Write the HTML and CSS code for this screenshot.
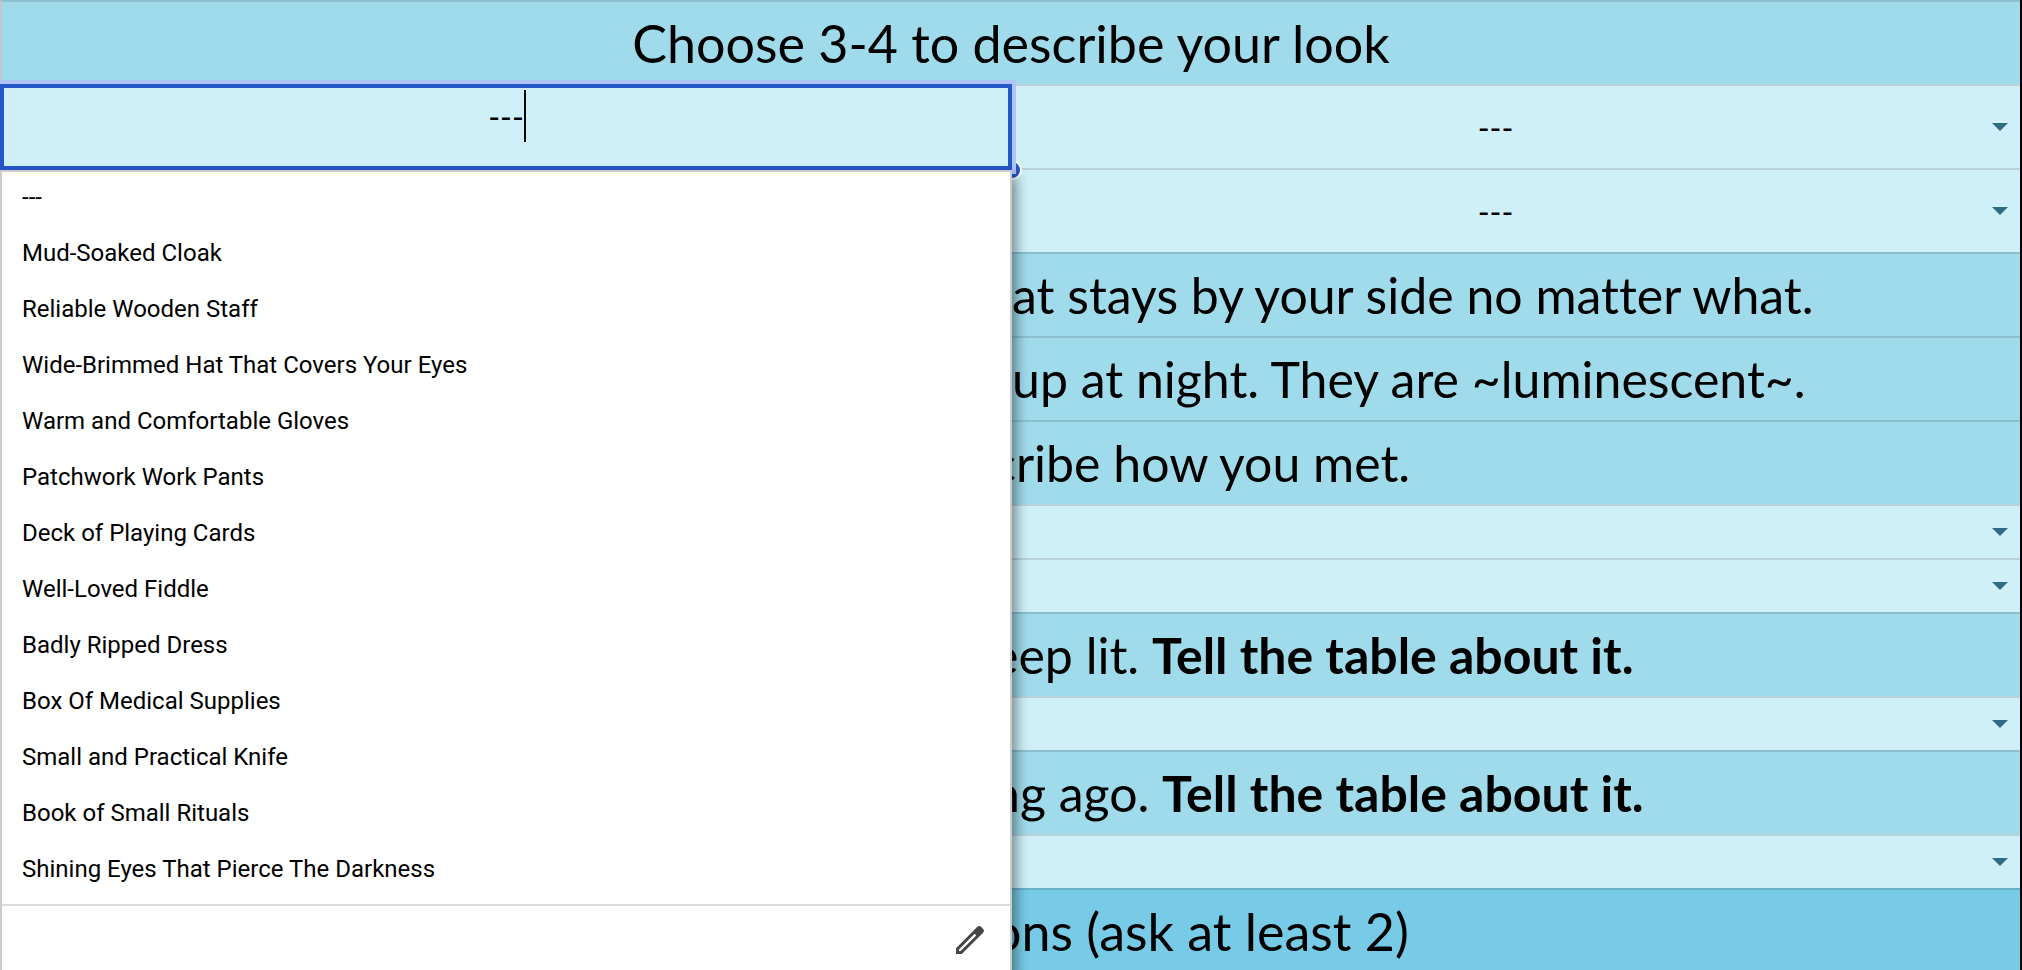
FILE: index.html
```html
<!DOCTYPE html>
<html lang="en">
<head>
<meta charset="utf-8">
<title>Character sheet</title>
<link rel="stylesheet" href="styles.css">
</head>
<body>
<main class="sheet">
  <h1 class="row heading title">Choose 3-4 to describe your look</h1>
  <div class="row pick tall">
    <label class="choice"><select aria-label="Look, second choice"><option>---</option></select><svg class="arrow" viewBox="0 0 16 8"><path d="M0 0h16L8 8z"/></svg></label>
  </div>
  <div class="row pick tall">
    <label class="choice"><select aria-label="Look, fourth choice"><option>---</option></select><svg class="arrow" viewBox="0 0 16 8"><path d="M0 0h16L8 8z"/></svg></label>
  </div>
  <p class="row note">at stays by your side no matter what.</p>
  <p class="row note">up at night. They are ~luminescent~.</p>
  <p class="row note cut">cribe how you met.</p>
  <div class="row pick">
    <label class="choice"><select aria-label="Meeting, first choice"><option></option></select><svg class="arrow" viewBox="0 0 16 8"><path d="M0 0h16L8 8z"/></svg></label>
  </div>
  <div class="row pick">
    <label class="choice"><select aria-label="Meeting, second choice"><option></option></select><svg class="arrow" viewBox="0 0 16 8"><path d="M0 0h16L8 8z"/></svg></label>
  </div>
  <p class="row note cut">eep lit. <b>Tell the table about it.</b></p>
  <div class="row pick">
    <label class="choice"><select aria-label="Light"><option></option></select><svg class="arrow" viewBox="0 0 16 8"><path d="M0 0h16L8 8z"/></svg></label>
  </div>
  <p class="row note cut">ng ago. <b>Tell the table about it.</b></p>
  <div class="row pick">
    <label class="choice"><select aria-label="Past"><option></option></select><svg class="arrow" viewBox="0 0 16 8"><path d="M0 0h16L8 8z"/></svg></label>
  </div>
  <h2 class="row heading note cut deep">ons (ask at least 2)</h2>

  <div class="picker">
    <span class="handle"></span>
    <div class="editor">
      <input class="field" type="text" value="---" aria-label="Look, first choice">
      <span class="caret"></span>
    </div>
    <div class="menu">
      <ul class="options" role="listbox" aria-label="Look options">
        <li role="option">---</li>
        <li role="option">Mud-Soaked Cloak</li>
        <li role="option">Reliable Wooden Staff</li>
        <li role="option">Wide-Brimmed Hat That Covers Your Eyes</li>
        <li role="option">Warm and Comfortable Gloves</li>
        <li role="option">Patchwork Work Pants</li>
        <li role="option">Deck of Playing Cards</li>
        <li role="option">Well-Loved Fiddle</li>
        <li role="option">Badly Ripped Dress</li>
        <li role="option">Box Of Medical Supplies</li>
        <li role="option">Small and Practical Knife</li>
        <li role="option">Book of Small Rituals</li>
        <li role="option">Shining Eyes That Pierce The Darkness</li>
      </ul>
      <div class="footer">
        <button class="edit" type="button" aria-label="Edit options"><svg viewBox="0 0 28 28"><path fill-rule="evenodd" d="M0 22.200 21.100 1.100q2.100-2.100 4.200 0l1.600 1.600q2.100 2.100 0 4.200L5.800 28H0zM3 23.400V25h1.600L20.300 9.400l-1.700-1.700z"/></svg></button>
      </div>
    </div>
  </div>
</main>
</body>
</html>
```
FILE: styles.css
```css
* { box-sizing: border-box; }

body {
  margin: 0;
  font-family: Lato, sans-serif;
  color: #000;
}

.sheet {
  position: relative;
  height: 100vh;
  overflow: hidden;
  border-right: 2px solid #000;
}

.row {
  margin: 0;
  height: 84px;
  border-top: 2px solid #8cc0cf;
  border-left: 2px solid #c4c8ca;
  background: #a0dbeb;
  font-size: 50px;
  font-weight: 400;
  font-variant-ligatures: none;
  line-height: 82px;
  white-space: nowrap;
}

.heading { font-size: 52px; }

.title { text-align: center; }

.note { padding-left: 50%; }

.cut { text-indent: -20px; }

.deep {
  background: #77cbe7;
  border-top-color: #69b2ca;
}

.pick {
  display: flex;
  justify-content: flex-end;
  height: 54px;
  border-top-color: #b8d2dc;
  background: #cff0f9;
}

.tall { height: 84px; }

.choice {
  position: relative;
  display: flex;
  align-items: center;
  width: 50%;
}

.choice select {
  flex: 1;
  height: 100%;
  padding: 0 40px 0 0;
  border: 0;
  background: transparent;
  color: #000;
  font: 32px Lato, sans-serif;
  text-align: center;
  text-align-last: center;
  appearance: none;
}

.arrow {
  position: absolute;
  right: 12px;
  width: 16px;
  height: 8px;
  fill: #2f6c81;
  pointer-events: none;
}

/* Open cell editor with its option list, lying over the left half */
.picker {
  position: absolute;
  top: 84px;
  left: 0;
  width: calc(50% + 2px);
}

.editor {
  position: relative;
  height: 86px;
  border: 4px solid #2656cc;
  background: #cff0f9;
  box-shadow: 0 0 0 4px #aec5f5;
}

.field {
  display: block;
  width: 100%;
  height: 56px;
  padding: 0;
  border: 0;
  outline: 0;
  background: transparent;
  font: 32px Lato, sans-serif;
  text-align: center;
}

.caret {
  position: absolute;
  top: 2px;
  left: calc(50% + 18px);
  width: 2px;
  height: 52px;
  background: #000;
}

.handle {
  position: absolute;
  top: 76px;
  right: -10px;
  width: 20px;
  height: 20px;
  border: 2px solid #fff;
  border-radius: 50%;
  background: #2656cc;
}

.menu {
  position: relative;
  border: 2px solid #ccc;
  background: #fff;
  box-shadow: 4px 6px 12px rgba(0, 0, 0, 0.45);
}

.options {
  margin: 0;
  padding: 0 0 4px;
  list-style: none;
  font: 24px/50px Roboto, sans-serif;
}

.options li {
  height: 56px;
  padding-left: 20px;
}

.footer {
  display: flex;
  justify-content: flex-end;
  padding: 20px 26px;
  border-top: 2px solid #dadce0;
}

.edit {
  width: 28px;
  height: 28px;
  padding: 0;
  border: 0;
  background: transparent;
}

.edit svg {
  display: block;
  fill: #444746;
}
```
